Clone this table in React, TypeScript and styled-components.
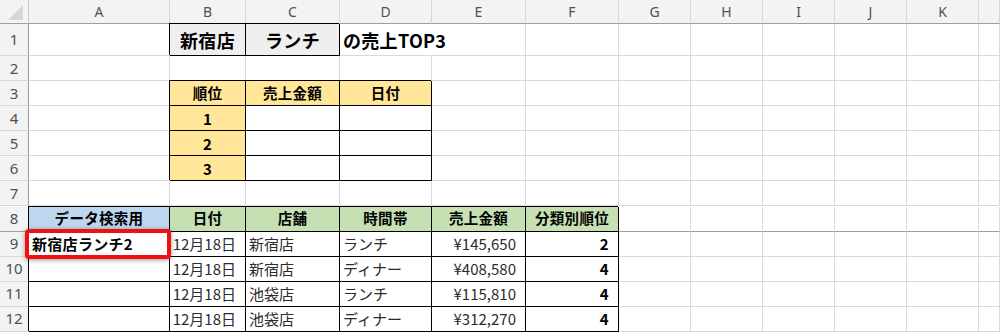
import styled, { createGlobalStyle } from "styled-components";

const GlobalStyle = createGlobalStyle`
  html, body {
    margin: 0;
    padding: 0;
    background: #ffffff;
  }
  body {
    font-family: "Noto Sans CJK JP", "Noto Sans", sans-serif;
  }
`;

const fills = {
  none: "transparent",
  gray: "#efefef",
  gold: "#ffe699",
  blue: "#bdd7ee",
  green: "#c6e0b4",
} as const;

type Fill = keyof typeof fills;
type Align = "left" | "center" | "right";

interface CellSpec {
  text?: string;
  bold?: boolean;
  size?: number;
  align?: Align;
  fill?: Fill;
  boxed?: boolean;
  overflow?: boolean;
  selected?: boolean;
}

const columns = ["A", "B", "C", "D", "E", "F", "G", "H", "I", "J", "K", ""];

const empty = (): CellSpec => ({});

const row = (cells: CellSpec[]): CellSpec[] => {
  const out = [...cells];
  while (out.length < columns.length) out.push(empty());
  return out;
};

const title = (text: string): CellSpec => ({ text, bold: true, size: 18, align: "center", fill: "gray", boxed: true });
const head = (text: string, fill: Fill): CellSpec => ({ text, bold: true, size: 14.5, align: "center", fill, boxed: true });
const plain = (text: string, align: Align = "left"): CellSpec => ({ text, align, boxed: true });
const rank = (text: string): CellSpec => ({ text, bold: true, align: "right", boxed: true });

const sales = [
  ["新宿店", "ランチ", "¥145,650", "2"],
  ["新宿店", "ディナー", "¥408,580", "4"],
  ["池袋店", "ランチ", "¥115,810", "4"],
  ["池袋店", "ディナー", "¥312,270", "4"],
];

const sheet: CellSpec[][] = [
  row([empty(), title("新宿店"), title("ランチ"), { text: "の売上TOP3", bold: true, size: 18, overflow: true }]),
  row([]),
  row([empty(), head("順位", "gold"), head("売上金額", "gold"), head("日付", "gold")]),
  ...["1", "2", "3"].map((n) =>
    row([empty(), { text: n, bold: true, align: "center", fill: "gold", boxed: true }, plain(""), plain("")])
  ),
  row([]),
  row([
    head("データ検索用", "blue"),
    head("日付", "green"),
    head("店舗", "green"),
    head("時間帯", "green"),
    head("売上金額", "green"),
    head("分類別順位", "green"),
  ]),
  ...sales.map(([store, time, amount, r], i) =>
    row([
      i === 0 ? { text: "新宿店ランチ2", bold: true, boxed: true, selected: true } : plain(""),
      plain("12月18日", "right"),
      plain(store),
      plain(time),
      plain(amount, "right"),
      rank(r),
    ])
  ),
];

const rowHeights = [32, 25, 25, 25, 25, 25, 25, 25, 25, 25, 25, 25];
const FREEZE_ROW = 8;

const App = () => {
  return (
    <>
      <GlobalStyle />
      <Sheet>
        <Corner>
          <svg width="29" height="24" viewBox="0 0 29 24">
            <polygon points="24,6 24,21 9,21" fill="#d6d6d6" />
          </svg>
        </Corner>
        {columns.map((c, i) => (
          <ColHeader key={`col-${i}`}>{c}</ColHeader>
        ))}
        {sheet.map((cells, r) => (
          <Row key={`row-${r}`} $height={rowHeights[r]}>
            <RowHeader $freeze={r + 1 === FREEZE_ROW}>{r + 1}</RowHeader>
            {cells.map((cell, c) => (
              <Cell
                key={`cell-${r}-${c}`}
                $fill={cell.fill ?? "none"}
                $align={cell.align ?? "left"}
                $bold={!!cell.bold}
                $size={cell.size ?? 15}
                $boxed={!!cell.boxed}
                $overflow={!!cell.overflow}
                $freeze={r + 1 === FREEZE_ROW}
                $selected={!!cell.selected}
              >
                {cell.text}
              </Cell>
            ))}
          </Row>
        ))}
      </Sheet>
    </>
  );
};

const Sheet = styled.div`
  display: grid;
  grid-template-columns: 29px 141px 76px 94px 92px 94px 93px 72px 72px 72px 72px 72px 1fr;
  grid-template-rows: 24px;
  grid-auto-rows: auto;
  width: 1000px;
  height: 332px;
  overflow: hidden;
  background: #ffffff;
`;

const Row = styled.div<{ $height: number }>`
  display: contents;

  & > * {
    height: ${({ $height }) => $height}px;
  }
`;

const Corner = styled.div`
  box-sizing: border-box;
  background: #f3f3f3;
  border-right: 1px solid #c8c8c8;
  border-bottom: 1px solid #9e9e9e;

  svg {
    display: block;
    margin: -1px 0 0 -1px;
  }
`;

const ColHeader = styled.div`
  box-sizing: border-box;
  display: flex;
  align-items: center;
  justify-content: center;
  background: #f3f3f3;
  border-right: 1px solid #d6d6d6;
  border-bottom: 1px solid #9e9e9e;
  color: #505050;
  font-family: "Noto Sans", "Liberation Sans", sans-serif;
  font-size: 14px;
  line-height: 1;
  padding-top: 1px;
`;

const RowHeader = styled.div<{ $freeze: boolean }>`
  box-sizing: border-box;
  display: flex;
  align-items: center;
  justify-content: center;
  background: #f3f3f3;
  border-right: 1px solid #9e9e9e;
  border-bottom: 1px solid ${({ $freeze }) => ($freeze ? "#9e9e9e" : "#d6d6d6")};
  color: #505050;
  font-family: "Noto Sans", "Liberation Sans", sans-serif;
  font-size: 15px;
  line-height: 1;
`;

const Cell = styled.div<{
  $fill: Fill;
  $align: Align;
  $bold: boolean;
  $size: number;
  $boxed: boolean;
  $overflow: boolean;
  $freeze: boolean;
  $selected: boolean;
}>`
  position: relative;
  box-sizing: border-box;
  display: flex;
  align-items: center;
  justify-content: ${({ $align }) =>
    $align === "center" ? "center" : $align === "right" ? "flex-end" : "flex-start"};
  padding: ${({ $align }) => ($align === "right" ? "0 9px 0 3px" : "0 3px")};
  background: ${({ $fill }) => fills[$fill]};
  border-right: 1px solid
    ${({ $boxed, $overflow }) => ($boxed ? "#000" : $overflow ? "transparent" : "#dadada")};
  border-bottom: 1px solid
    ${({ $boxed, $freeze }) => ($boxed ? "#000" : $freeze ? "#9e9e9e" : "#dadada")};
  box-shadow: ${({ $boxed }) => ($boxed ? "-1px -1px 0 0 #000" : "none")};
  color: ${({ $bold }) => ($bold ? "#000" : "#2b2b2b")};
  font-family: "Noto Sans CJK JP", "Noto Sans", sans-serif;
  font-size: ${({ $size }) => $size}px;
  font-weight: ${({ $bold }) => ($bold ? 700 : 400)};
  letter-spacing: ${({ $bold }) => ($bold ? "0.3px" : "0")};
  line-height: 1;
  white-space: nowrap;
  overflow: visible;
  z-index: ${({ $overflow, $selected }) => ($overflow || $selected ? 1 : "auto")};

  ${({ $selected }) =>
    $selected &&
    `
    &::after {
      content: "";
      position: absolute;
      top: -3px;
      left: -4px;
      right: -2px;
      bottom: -3px;
      border: 4px solid #f01010;
      border-radius: 4px;
      box-shadow: 0 1px 5px rgba(0, 0, 0, 0.4);
      pointer-events: none;
    }
  `}
`;

export default App;
